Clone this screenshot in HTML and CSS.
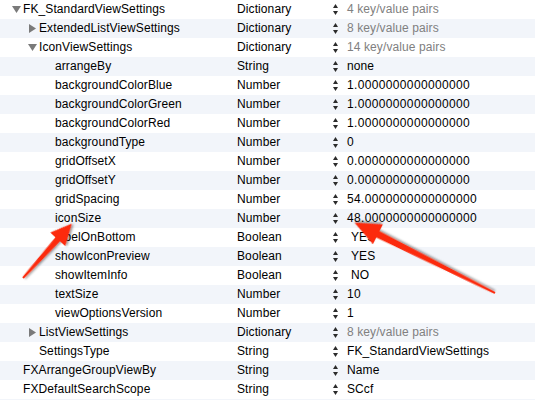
FILE: index.html
```html
<!DOCTYPE html>
<html>
<head>
<meta charset="utf-8">
<link rel="stylesheet" href="styles.css">
</head>
<body>
<div class="plist">
  <div class="row"><div class="key l0"><span class="disc down"><svg width="9" height="7"><polygon points="0,0 9,0 4.5,7" /></svg></span>FK_StandardViewSettings</div><div class="type">Dictionary</div><div class="step"><svg width="5" height="11"><polygon points="0,4 2.5,0 5,4"/><polygon points="0,7 5,7 2.5,11"/></svg></div><div class="val dim">4 key/value pairs</div></div>
  <div class="row"><div class="key l1"><span class="disc right"><svg width="7" height="9"><polygon points="0,0 7,4.5 0,9" /></svg></span>ExtendedListViewSettings</div><div class="type">Dictionary</div><div class="step"><svg width="5" height="11"><polygon points="0,4 2.5,0 5,4"/><polygon points="0,7 5,7 2.5,11"/></svg></div><div class="val dim">8 key/value pairs</div></div>
  <div class="row"><div class="key l1"><span class="disc down"><svg width="9" height="7"><polygon points="0,0 9,0 4.5,7" /></svg></span>IconViewSettings</div><div class="type">Dictionary</div><div class="step"><svg width="5" height="11"><polygon points="0,4 2.5,0 5,4"/><polygon points="0,7 5,7 2.5,11"/></svg></div><div class="val dim">14 key/value pairs</div></div>
  <div class="row"><div class="key l2">arrangeBy</div><div class="type">String</div><div class="step"><svg width="5" height="11"><polygon points="0,4 2.5,0 5,4"/><polygon points="0,7 5,7 2.5,11"/></svg></div><div class="val">none</div></div>
  <div class="row"><div class="key l2">backgroundColorBlue</div><div class="type">Number</div><div class="step"><svg width="5" height="11"><polygon points="0,4 2.5,0 5,4"/><polygon points="0,7 5,7 2.5,11"/></svg></div><div class="val num">1.0000000000000000</div></div>
  <div class="row"><div class="key l2">backgroundColorGreen</div><div class="type">Number</div><div class="step"><svg width="5" height="11"><polygon points="0,4 2.5,0 5,4"/><polygon points="0,7 5,7 2.5,11"/></svg></div><div class="val num">1.0000000000000000</div></div>
  <div class="row"><div class="key l2">backgroundColorRed</div><div class="type">Number</div><div class="step"><svg width="5" height="11"><polygon points="0,4 2.5,0 5,4"/><polygon points="0,7 5,7 2.5,11"/></svg></div><div class="val num">1.0000000000000000</div></div>
  <div class="row"><div class="key l2">backgroundType</div><div class="type">Number</div><div class="step"><svg width="5" height="11"><polygon points="0,4 2.5,0 5,4"/><polygon points="0,7 5,7 2.5,11"/></svg></div><div class="val num">0</div></div>
  <div class="row"><div class="key l2">gridOffsetX</div><div class="type">Number</div><div class="step"><svg width="5" height="11"><polygon points="0,4 2.5,0 5,4"/><polygon points="0,7 5,7 2.5,11"/></svg></div><div class="val num">0.0000000000000000</div></div>
  <div class="row"><div class="key l2">gridOffsetY</div><div class="type">Number</div><div class="step"><svg width="5" height="11"><polygon points="0,4 2.5,0 5,4"/><polygon points="0,7 5,7 2.5,11"/></svg></div><div class="val num">0.0000000000000000</div></div>
  <div class="row"><div class="key l2">gridSpacing</div><div class="type">Number</div><div class="step"><svg width="5" height="11"><polygon points="0,4 2.5,0 5,4"/><polygon points="0,7 5,7 2.5,11"/></svg></div><div class="val num">54.0000000000000000</div></div>
  <div class="row"><div class="key l2">iconSize</div><div class="type">Number</div><div class="step"><svg width="5" height="11"><polygon points="0,4 2.5,0 5,4"/><polygon points="0,7 5,7 2.5,11"/></svg></div><div class="val num">48.0000000000000000</div></div>
  <div class="row"><div class="key l2">labelOnBottom</div><div class="type">Boolean</div><div class="step"><svg width="5" height="11"><polygon points="0,4 2.5,0 5,4"/><polygon points="0,7 5,7 2.5,11"/></svg></div><div class="val pop">YES</div></div>
  <div class="row"><div class="key l2">showIconPreview</div><div class="type">Boolean</div><div class="step"><svg width="5" height="11"><polygon points="0,4 2.5,0 5,4"/><polygon points="0,7 5,7 2.5,11"/></svg></div><div class="val pop">YES</div></div>
  <div class="row"><div class="key l2">showItemInfo</div><div class="type">Boolean</div><div class="step"><svg width="5" height="11"><polygon points="0,4 2.5,0 5,4"/><polygon points="0,7 5,7 2.5,11"/></svg></div><div class="val pop">NO</div></div>
  <div class="row"><div class="key l2">textSize</div><div class="type">Number</div><div class="step"><svg width="5" height="11"><polygon points="0,4 2.5,0 5,4"/><polygon points="0,7 5,7 2.5,11"/></svg></div><div class="val num">10</div></div>
  <div class="row"><div class="key l2">viewOptionsVersion</div><div class="type">Number</div><div class="step"><svg width="5" height="11"><polygon points="0,4 2.5,0 5,4"/><polygon points="0,7 5,7 2.5,11"/></svg></div><div class="val num">1</div></div>
  <div class="row"><div class="key l1"><span class="disc right"><svg width="7" height="9"><polygon points="0,0 7,4.5 0,9" /></svg></span>ListViewSettings</div><div class="type">Dictionary</div><div class="step"><svg width="5" height="11"><polygon points="0,4 2.5,0 5,4"/><polygon points="0,7 5,7 2.5,11"/></svg></div><div class="val dim">8 key/value pairs</div></div>
  <div class="row"><div class="key l1 nodisc">SettingsType</div><div class="type">String</div><div class="step"><svg width="5" height="11"><polygon points="0,4 2.5,0 5,4"/><polygon points="0,7 5,7 2.5,11"/></svg></div><div class="val">FK_StandardViewSettings</div></div>
  <div class="row"><div class="key l0 nodisc">FXArrangeGroupViewBy</div><div class="type">String</div><div class="step"><svg width="5" height="11"><polygon points="0,4 2.5,0 5,4"/><polygon points="0,7 5,7 2.5,11"/></svg></div><div class="val">Name</div></div>
  <div class="row"><div class="key l0 nodisc">FXDefaultSearchScope</div><div class="type">String</div><div class="step"><svg width="5" height="11"><polygon points="0,4 2.5,0 5,4"/><polygon points="0,7 5,7 2.5,11"/></svg></div><div class="val">SCcf</div></div>
  <div class="row"></div>
</div>
<svg class="arrows" width="535" height="400" viewBox="0 0 535 400">
  <defs>
    <filter id="sh" x="-20%" y="-20%" width="140%" height="140%">
      <feDropShadow dx="1" dy="1.5" stdDeviation="1" flood-color="#000" flood-opacity="0.45"/>
    </filter>
  </defs>
  <polygon filter="url(#sh)" class="arrow" transform="translate(23 278) rotate(-48.1)" points="0,-1 52,-3 52,-10 73,0 52,10 52,3 0,1"/>
  <polygon filter="url(#sh)" class="arrow" transform="translate(495 293) rotate(-153.4)" points="0,-1 131,-3.5 131,-11 157,0 131,11 131,3.5 0,1"/>
</svg>
</body>
</html>
```

FILE: styles.css
```css
html, body {
  margin: 0;
  padding: 0;
  background: #ffffff;
}
body {
  width: 535px;
  height: 400px;
  overflow: hidden;
  position: relative;
  font-family: "Liberation Sans", Arial, sans-serif;
  font-size: 12px;
  letter-spacing: 0.1px;
  color: #000;
}
.plist {
  display: flex;
  flex-direction: column;
}
.row {
  display: grid;
  grid-template-columns: 237px 96px 14px 1fr;
  height: 19px;
  line-height: 19px;
  white-space: nowrap;
}
.row:nth-child(even) {
  background: #f2f5fa;
}
.key {
  display: flex;
  align-items: center;
  overflow: hidden;
}
.key.l0 { padding-left: 7px; }
.key.l1 { padding-left: 23px; }
.key.l2 { padding-left: 55px; }
.key.nodisc.l0 { padding-left: 23px; }
.key.nodisc.l1 { padding-left: 39px; }
.disc {
  width: 16px;
  height: 19px;
  display: flex;
  align-items: center;
}
.disc svg { display: block; fill: #7a7a7a; }
.disc.down svg { margin-left: 5px; }
.disc.right svg { margin-left: 6px; }
.step {
  display: flex;
  align-items: center;
}
.step svg {
  display: block;
  fill: #2b2b2b;
}
.val.num { letter-spacing: 0.35px; }
.val.dim { color: #808080; }
.val.pop { padding-left: 4px; }
.arrows {
  position: absolute;
  left: 0;
  top: 0;
  pointer-events: none;
}
.arrow { fill: #fc2a0e; }
```
